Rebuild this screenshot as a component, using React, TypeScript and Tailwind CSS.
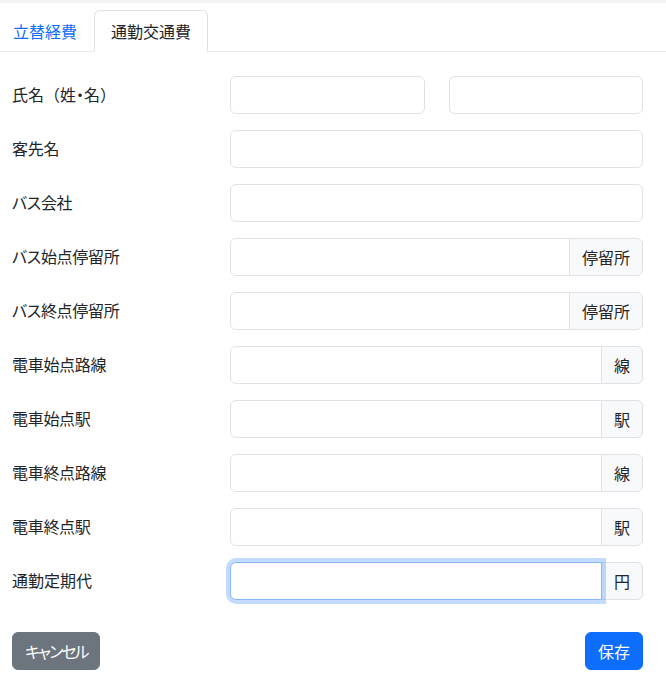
import { useState } from "react";

const rows = [
  { label: "客先名" },
  { label: "バス会社" },
  { label: "バス始点停留所", addon: "停留所" },
  { label: "バス終点停留所", addon: "停留所" },
  { label: "電車始点路線", addon: "線" },
  { label: "電車始点駅", addon: "駅" },
  { label: "電車終点路線", addon: "線" },
  { label: "電車終点駅", addon: "駅" },
];

const inputBase =
  "block w-full h-[38px] px-3 py-1.5 text-base leading-6 text-[#212529] bg-white border border-[#dee2e6] outline-none";

export default function App() {
  const [tab, setTab] = useState("commute");

  return (
    <div className="min-h-[691px] bg-white text-[#212529] font-['Noto_Sans_CJK_JP','Noto_Sans',sans-serif] [font-feature-settings:'palt']">
      <div className="h-[3px] bg-[#f3f4f5]" />
      <div className="pt-[7px]">
        <div className="flex border-b border-[#e9ecef] -ml-1">
          <button
            onClick={() => setTab("expense")}
            className={`-mb-px px-4 py-2 text-base leading-6 border rounded-t-md ${
              tab === "expense"
                ? "border-[#dee2e6] border-b-white bg-white text-[#212529]"
                : "border-transparent text-[#0d6efd]"
            }`}
          >
            立替経費
          </button>
          <button
            onClick={() => setTab("commute")}
            className={`-mb-px px-4 py-2 text-base leading-6 border rounded-t-md ${
              tab === "commute"
                ? "border-[#dee2e6] border-b-white bg-white text-[#212529]"
                : "border-transparent text-[#0d6efd]"
            }`}
          >
            通勤交通費
          </button>
        </div>
      </div>

      <form className="pl-3 pr-[23px] mt-6 flex flex-col gap-4">
        <div className="flex items-center">
          <label className="w-[218px] shrink-0 text-base leading-6 -mt-0.5 [font-feature-settings:normal]">
            氏名（姓<span className="[font-feature-settings:'palt']">・</span>名）
          </label>
          <div className="flex-1 grid grid-cols-2 gap-6">
            <input className={`${inputBase} rounded-md`} />
            <input className={`${inputBase} rounded-md`} />
          </div>
        </div>

        {rows.map((r) => (
          <div key={r.label} className="flex items-center">
            <label className="w-[218px] shrink-0 text-base leading-6 -mt-0.5 tracking-[-0.3px]">{r.label}</label>
            {r.addon ? (
              <div className="flex-1 flex">
                <input className={`${inputBase} rounded-l-md`} />
                <span className="-ml-px flex items-center h-[38px] px-3 text-base leading-6 bg-[#f8f9fa] border border-[#dee2e6] rounded-r-md whitespace-nowrap">
                  {r.addon}
                </span>
              </div>
            ) : (
              <div className="flex-1">
                <input className={`${inputBase} rounded-md`} />
              </div>
            )}
          </div>
        ))}

        <div className="flex items-center">
          <label className="w-[218px] shrink-0 text-base leading-6 -mt-0.5">通勤定期代</label>
          <div className="flex-1 flex">
            <input
              className={`${inputBase} relative z-10 rounded-l-md !border-[#86b7fe] shadow-[0_0_0_4px_rgba(13,110,253,0.25)]`}
            />
            <span className="-ml-px flex items-center h-[38px] px-3 text-base leading-6 bg-[#f8f9fa] border border-[#dee2e6] rounded-r-md">
              円
            </span>
          </div>
        </div>

        <div className="mt-4 flex justify-between">
          <button
            type="button"
            className="h-[38px] px-3 py-1.5 text-base leading-6 tracking-[-2px] text-white bg-[#6c757d] border border-[#6c757d] rounded-md"
          >
            キャンセル
          </button>
          <button
            type="button"
            className="h-[38px] px-3 py-1.5 text-base leading-6 text-white bg-[#0d6efd] border border-[#0d6efd] rounded-md"
          >
            保存
          </button>
        </div>
      </form>
    </div>
  );
}
